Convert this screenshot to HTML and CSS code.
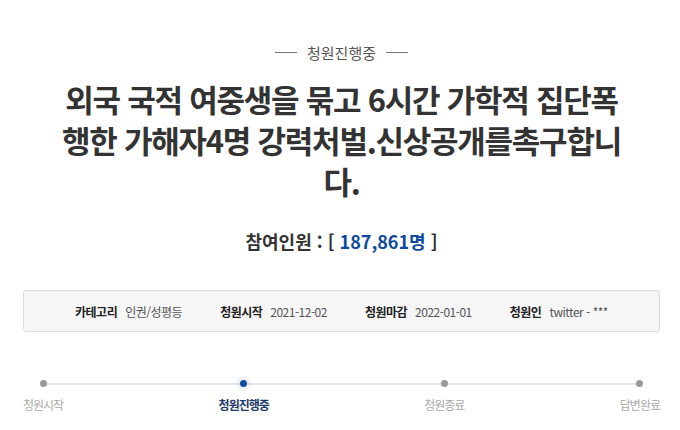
FILE: index.html
```html
<!DOCTYPE html>
<html lang="ko">
<head>
<meta charset="utf-8">
<link rel="stylesheet" href="styles.css">
</head>
<body>
<div class="page">
  <div class="status"><span class="dash"></span><span class="status-text">청원진행중</span><span class="dash"></span></div>
  <h1 class="title">외국 국적 여중생을 묶고 6시간 가학적 집단폭행한 가해자4명 강력처벌.신상공개를촉구합니다.</h1>
  <div class="count">참여인원 : [ <span class="num">187,861명</span> ]</div>
  <ul class="info">
    <li><b>카테고리</b><span>인권/성평등</span></li>
    <li><b>청원시작</b><span>2021-12-02</span></li>
    <li><b>청원마감</b><span>2022-01-01</span></li>
    <li><b>청원인</b><span>twitter - ***</span></li>
  </ul>
  <div class="progress">
    <div class="track"></div>
    <div class="step"><i class="dot"></i><span>청원시작</span></div>
    <div class="step active"><i class="dot"></i><span>청원진행중</span></div>
    <div class="step"><i class="dot"></i><span>청원종료</span></div>
    <div class="step"><i class="dot"></i><span>답변완료</span></div>
  </div>
</div>
</body>
</html>
```
FILE: styles.css
```css
html, body { margin: 0; padding: 0; background: #fff; }
body { font-family: "Noto Sans CJK KR", "Noto Sans", sans-serif; color: #333; }
.page { width: 637px; margin-left: 23px; padding-top: 40px; padding-bottom: 10px; }
.status { display: flex; justify-content: center; align-items: center; gap: 10px; height: 24px; }
.dash { width: 22px; height: 1px; background: #777; }
.status-text { font-size: 15px; color: #555; }
.title { width: 566px; margin: 14px auto 0; font-size: 31px; line-height: 41px; letter-spacing: -1.25px; font-weight: 700; text-align: center; color: #333; }
.count { margin-top: 27px; text-align: center; font-size: 18px; font-weight: 700; color: #333; }
.num { color: #0b4a9c; }
.info { list-style: none; margin: 36px 0 0; padding: 0; height: 40px; border: 1px solid #ddd; border-radius: 3px; background: #f6f6f6; display: flex; justify-content: center; align-items: center; gap: 38px; font-size: 12px; }
.info li { display: flex; gap: 8px; align-items: center; }
.info b { font-weight: 700; color: #222; letter-spacing: -0.5px; }
.info span { color: #555; letter-spacing: -0.5px; }
.progress { position: relative; display: flex; justify-content: space-between; margin-top: 48px; }
.track { position: absolute; left: 20px; right: 22px; top: 3px; height: 2px; background: #e6e6e6; }
.step { position: relative; display: flex; flex-direction: column; align-items: center; }
.dot { display: block; width: 7px; height: 7px; border-radius: 50%; background: #999; }
.step span { margin-top: 9px; font-size: 12px; line-height: 18px; letter-spacing: -1px; color: #aaa; white-space: nowrap; }
.active .dot { background: #0b4ea2; box-shadow: 0 0 0 4px rgba(11,78,162,0.06); }
.active span { color: #1c3a68; font-weight: 700; letter-spacing: -1px; }
```
